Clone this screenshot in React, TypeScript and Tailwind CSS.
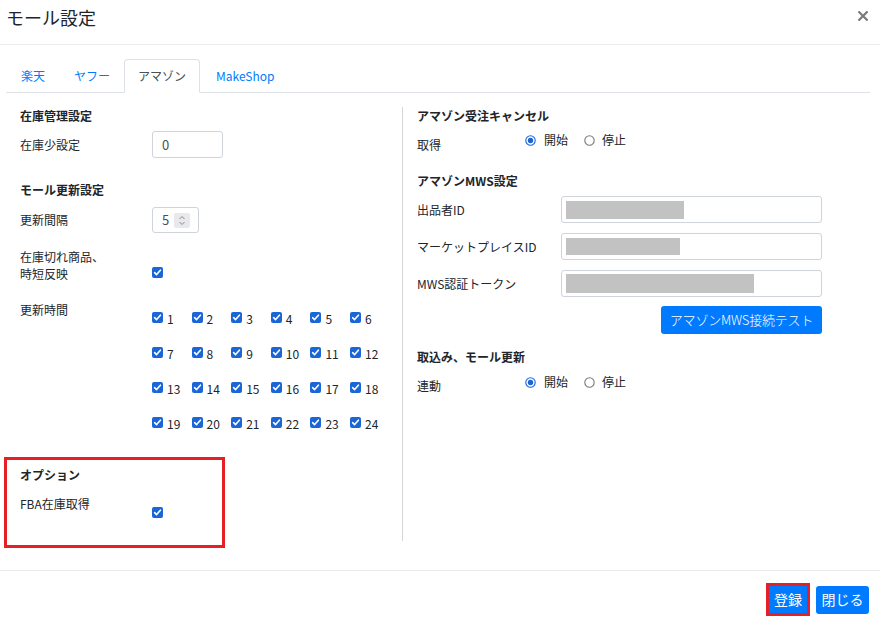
import React from "react";

const Check = () => (
  <span className="w-[11px] h-[11px] rounded-[2px] bg-[#1b66d6] flex items-center justify-center shrink-0">
    <svg width="9" height="9" viewBox="0 0 9 9">
      <path d="M1.6 4.7 L3.6 6.6 L7.4 2.2" fill="none" stroke="white" strokeWidth="1.6" strokeLinecap="round" strokeLinejoin="round" />
    </svg>
  </span>
);

const Radio = ({ on }: { on: boolean }) => (
  <svg width="11" height="11" viewBox="0 0 11 11" className="shrink-0">
    <circle cx="5.5" cy="5.5" r="4.7" fill="white" stroke={on ? "#1b66d6" : "#7a7a7a"} strokeWidth="1.1" />
    {on && <circle cx="5.5" cy="5.5" r="2.7" fill="#1b66d6" />}
  </svg>
);

const RadioGroup = () => (
  <div className="h-[16px] flex items-center">
    <Radio on={true} />
    <span className="ml-[8px] leading-[16px]">開始</span>
    <span className="ml-[16px]"><Radio on={false} /></span>
    <span className="ml-[7px] leading-[16px]">停止</span>
  </div>
);

const Heading = ({ children, className = "" }: { children: React.ReactNode; className?: string }) => (
  <div className={"h-[16px] leading-[16px] font-bold text-[12px] " + className}>{children}</div>
);

const MaskInput = ({ w, h }: { w: number; h: number }) => (
  <div className="w-[261px] h-[27px] border border-[#ced4da] rounded-[3px] bg-white flex items-center pl-[4px]">
    <div className="bg-[#c2c2c2]" style={{ width: w, height: h }} />
  </div>
);

export default function App() {
  const hours = Array.from({ length: 24 }, (_, i) => i + 1);
  return (
    <div className="w-[880px] h-[625px] bg-white text-[#212529] text-[12px] flex flex-col font-['Noto_Sans_CJK_JP','Noto_Sans',sans-serif]">
      {/* header */}
      <header className="h-[45px] shrink-0 border-b border-[#e9ecef] flex items-start justify-between pl-[6px] pr-[12px]">
        <h1 className="text-[18px] leading-[18px] mt-[8px] font-normal">モール設定</h1>
        <svg width="10" height="10" viewBox="0 0 10 10" className="mt-[11px]">
          <path d="M1.2 1.2 L8.8 8.8 M8.8 1.2 L1.2 8.8" stroke="#7b7b7b" strokeWidth="2.2" strokeLinecap="square" />
        </svg>
      </header>

      {/* body */}
      <main className="h-[525px] shrink-0 pl-[6px] pr-[10px] pt-[14px]">
        <div className="flex h-[34px] border-b border-[#dee2e6] text-[12px]">
          <div className="w-[54px] flex items-center justify-center text-[#007bff]">楽天</div>
          <div className="w-[64px] flex items-center justify-center text-[#007bff]">ヤフー</div>
          <div className="w-[76px] h-[34px] flex items-center justify-center text-[#495057] border border-[#dee2e6] border-b-white rounded-t-[4px] bg-white">アマゾン</div>
          <div className="px-[16px] flex items-center text-[#007bff]">MakeShop</div>
        </div>

        <div className="flex items-start pt-[14px]">
          {/* left column */}
          <div className="w-[396px] shrink-0 pl-[14px] pt-[1px]">
            <Heading>在庫管理設定</Heading>
            <div className="flex items-center mt-[7px] h-[27px]">
              <div className="w-[132px]">在庫少設定</div>
              <div className="w-[71px] h-[27px] border border-[#ced4da] rounded-[3px] flex items-center pl-[9px] text-[13px] text-[#495057]">0</div>
            </div>

            <Heading className="mt-[24px]">モール更新設定</Heading>
            <div className="flex items-center mt-[9px] h-[26px]">
              <div className="w-[132px]">更新間隔</div>
              <div className="w-[47px] h-[26px] border border-[#ced4da] rounded-[3px] flex items-center pl-[9px] text-[13px] text-[#495057]">
                <span>5</span>
                <span className="ml-[5px] w-[16px] h-[15px] bg-[#e9e9ed] rounded-[2px] flex items-center justify-center">
                  <svg width="8" height="11" viewBox="0 0 8 11">
                    <path d="M1.5 4 L4 1.5 L6.5 4 M1.5 7 L4 9.5 L6.5 7" fill="none" stroke="#8a8a8a" strokeWidth="1" />
                  </svg>
                </span>
              </div>
            </div>

            <div className="flex items-start mt-[15px]">
              <div className="w-[132px] leading-[17px]">
                在庫切れ商品、
                <br />
                時短反映
              </div>
              <div className="mt-[19px]"><Check /></div>
            </div>

            <div className="flex items-start mt-[20px]">
              <div className="w-[132px] leading-[16px]">更新時間</div>
              <div className="mt-[10px] grid grid-cols-[repeat(6,39.6px)] gap-y-[24px]">
                {hours.map((h) => (
                  <div key={h} className="flex items-center h-[11px] gap-[4px]">
                    <Check />
                    <span className="text-[12px] leading-[11px] mt-[2px]">{h}</span>
                  </div>
                ))}
              </div>
            </div>

            <div className="mt-[29px] -ml-[16px] w-[221px] h-[91px] border-[3px] border-[#e61e25] pl-[13px] pt-[7px]">
              <Heading>オプション</Heading>
              <div className="flex items-start mt-[13px]">
                <div className="w-[132px] leading-[16px]">FBA在庫取得</div>
                <div className="mt-[11px]"><Check /></div>
              </div>
            </div>
          </div>

          {/* right column */}
          <div className="flex-1 h-[434px] border-l border-[#d4d4d4] pl-[14px] pt-[1px]">
            <Heading>アマゾン受注キャンセル</Heading>
            <div className="flex items-start mt-[8px]">
              <div className="w-[108px] mt-[5px] leading-[16px]">取得</div>
              <RadioGroup />
            </div>

            <Heading className="mt-[20px]">アマゾンMWS設定</Heading>
            <div className="flex items-center mt-[7px] h-[27px]">
              <div className="w-[144px]">出品者ID</div>
              <MaskInput w={118} h={18} />
            </div>
            <div className="flex items-center mt-[10px] h-[27px]">
              <div className="w-[144px]">マーケットプレイスID</div>
              <MaskInput w={114} h={17} />
            </div>
            <div className="flex items-center mt-[10px] h-[27px]">
              <div className="w-[144px]">MWS認証トークン</div>
              <MaskInput w={188} h={19} />
            </div>
            <div className="mt-[9px] ml-[244px] w-[161px] h-[28px] rounded-[3px] bg-[#007bff] text-white text-[13px] font-light tracking-[-0.2px] flex items-center justify-center">
              アマゾンMWS接続テスト
            </div>

            <Heading className="mt-[15px]">取込み、モール更新</Heading>
            <div className="flex items-start mt-[9px]">
              <div className="w-[108px] mt-[4px] leading-[16px]">連動</div>
              <RadioGroup />
            </div>
          </div>
        </div>
      </main>

      {/* footer */}
      <footer className="h-[55px] shrink-0 border-t border-[#e9ecef] flex items-center justify-end pr-[11px] pt-[3px] gap-[6px]">
        <div className="w-[44px] h-[33px] border-[3px] border-[#e61e25] bg-[#007bff] text-white text-[14px] flex items-center justify-center">
          登録
        </div>
        <div className="w-[53px] h-[28px] rounded-[3px] bg-[#007bff] text-white text-[14px] flex items-center justify-center">
          閉じる
        </div>
      </footer>
    </div>
  );
}
